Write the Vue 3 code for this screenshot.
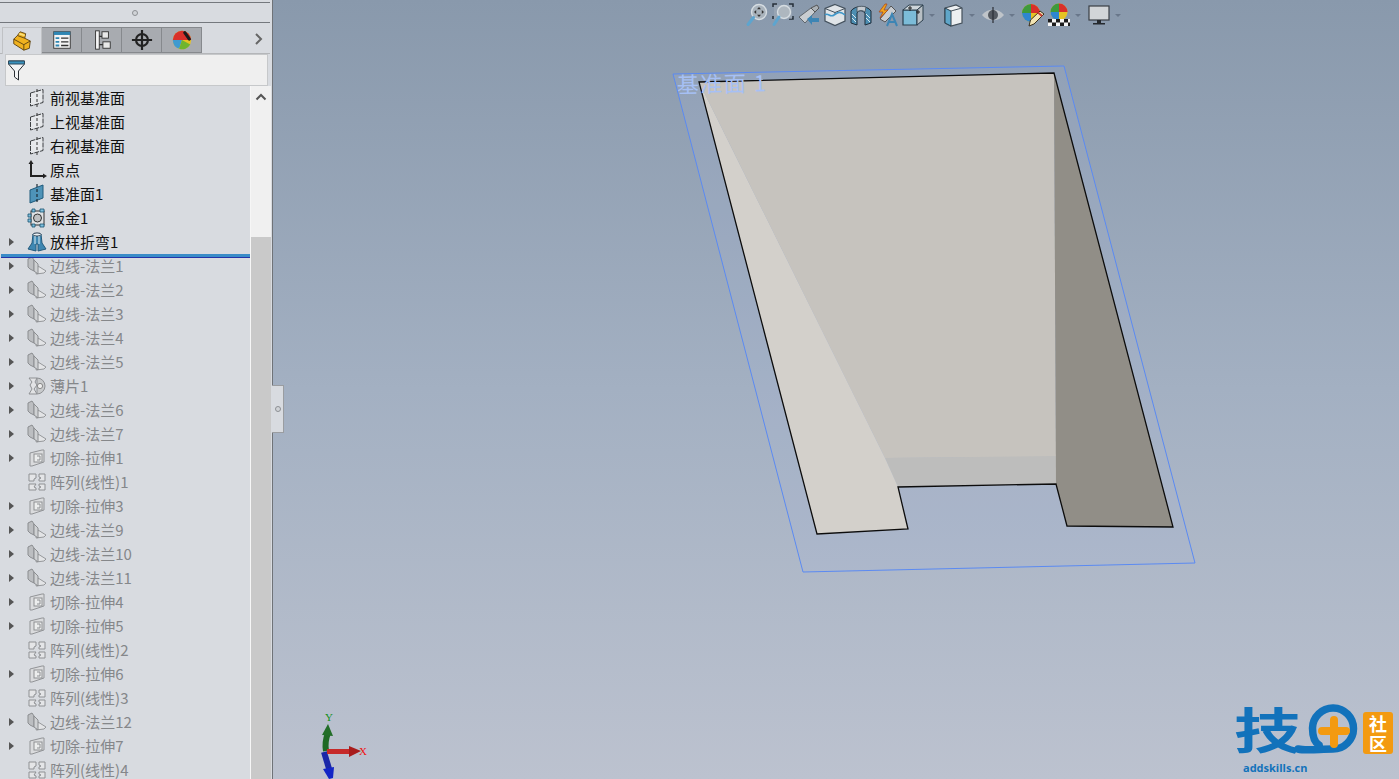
<script setup>
const flange = (n) => ({ label: `边线-法兰${n}`, icon: 'flange', arrow: true, off: true })
const cut = (n) => ({ label: `切除-拉伸${n}`, icon: 'cut', arrow: true, off: true })
const pattern = (n) => ({ label: `阵列(线性)${n}`, icon: 'pattern', arrow: false, off: true })

const rows = [
  { label: '前视基准面', icon: 'plane' },
  { label: '上视基准面', icon: 'plane' },
  { label: '右视基准面', icon: 'plane' },
  { label: '原点', icon: 'origin' },
  { label: '基准面1', icon: 'bluePlane' },
  { label: '钣金1', icon: 'sheet' },
  { label: '放样折弯1', icon: 'loft', arrow: true, rollback: true },
  flange(1), flange(2), flange(3), flange(4), flange(5),
  { label: '薄片1', icon: 'tab', arrow: true, off: true },
  flange(6), flange(7), cut(1), pattern(1), cut(3),
  flange(9), flange(10), flange(11), cut(4), cut(5), pattern(2), cut(6), pattern(3),
  flange(12), cut(7), pattern(4)
]
const tabs = ['tabFeature', 'tabProps', 'tabConfig', 'tabTarget', 'tabBall']
const tools = [
  { id: 'tFit' }, { id: 'tArea' }, { id: 'tPrev' }, { id: 'tSection' }, { id: 'tDyn' }, { id: 'tBolt' },
  { id: 'tCube', caret: true }, { id: 'tDisplay', caret: true }, { id: 'tEye', caret: true },
  { id: 'tBallPen' }, { id: 'tBallCheck', caret: true }, { id: 'tMonitor', caret: true }
]
</script>

<template>
  <div class="app">
    <svg class="defs" width="0" height="0" aria-hidden="true">
      <defs>
        <symbol id="plane" viewBox="0 0 20 20">
          <path d="M3.500 5 L16 1.500 V14.500 L3.500 18 Z" fill="#e6e8eb" stroke="#3c3f42" stroke-width="1" stroke-dasharray="5 1"/>
          <path d="M10 1 V19" stroke="#333" stroke-width="1" stroke-dasharray="3 2"/>
        </symbol>
        <symbol id="origin" viewBox="0 0 20 20">
          <path d="M4 2 V16 H18" fill="none" stroke="#222" stroke-width="2"/>
          <path d="M4 0 L1.500 4 H6.500 Z M20 16 L16 13.500 V18.500 Z" fill="#222"/>
        </symbol>
        <symbol id="bluePlane" viewBox="0 0 20 20">
          <path d="M3 6 L16 1 V14 L3 19 Z" fill="#4e93b8" stroke="#1f5a7c"/>
          <path d="M10 0 V20" stroke="#1d2b35" stroke-width="1.200" stroke-dasharray="3 2"/>
        </symbol>
        <symbol id="sheet" viewBox="0 0 20 20">
          <rect x="4" y="3" width="13" height="14" fill="#dfe1e3" stroke="#333"/>
          <circle cx="10.500" cy="10" r="4" fill="#bdbfc1" stroke="#333"/>
          <path d="M5 1h3v3H5zM13 1h4v3h-4zM1 6h3v3H1zM1 11h3v3H1zM5 16h3v3H5zM13 16h4v3h-4z" fill="#7fc0de" stroke="#17506f" stroke-width=".8"/>
        </symbol>
        <symbol id="loft" viewBox="0 0 20 20">
          <path d="M6 2 H14 L15 11 L19 17 L11 19 V12 H9 V19 L1 17 L5 11 Z" fill="#3f87b2" stroke="#245a7c"/>
          <ellipse cx="10" cy="2.500" rx="4" ry="1.600" fill="#e8eef2" stroke="#345"/>
          <path d="M8 4 V12 M12 4 V12" stroke="#dcebf3" stroke-width="1"/>
        </symbol>
        <symbol id="flange" viewBox="0 0 20 20">
          <path d="M11 10 L19 15 L17 17 L9 18 Z" fill="#e3e4e6" stroke="#96989b"/>
          <path d="M1 3 L5 1 L7 4 V15 L3 13 L1 11 Z" fill="#bcbec1" stroke="#8b8d90"/>
          <path d="M7 4 L11 8 V18 L7 15 Z" fill="#cfd1d3" stroke="#8b8d90"/>
        </symbol>
        <symbol id="cut" viewBox="0 0 20 20">
          <path d="M3 5 L15 2 H17 V14 L5 18 H3 Z" fill="#dadbdd" stroke="#929497"/>
          <rect x="7" y="6" width="8" height="8" fill="#eceded" stroke="#8d8f92"/>
          <path d="M10 8 H13 V12 H10" fill="none" stroke="#8d8f92"/>
        </symbol>
        <symbol id="pattern" viewBox="0 0 20 20">
          <path d="M2 2 H9 V6 L7 7 V9 H2 Z M12 2 H18 V9 H12 V7 L14 6 L12 5 Z M2 12 H9 L7 15 L9 16 V18 H2 Z M12 12 H18 V18 H12 V16 L14 15 L12 14 Z" fill="#e4e5e7" stroke="#8f9194"/>
        </symbol>
        <symbol id="tab" viewBox="0 0 20 20">
          <path d="M2 2 H10 L8 6 L10 9 L7 13 L10 18 H2 L5 13 L3 9 L5 6 Z" fill="#e2e3e5" stroke="#8f9194"/>
          <path d="M10 2 A8 8 0 0 1 10 18 Z" fill="#c8cacc" stroke="#8f9194"/>
          <circle cx="13" cy="10" r="2.600" fill="#eee" stroke="#888"/>
        </symbol>

        <symbol id="tabFeature" viewBox="0 0 24 24">
          <path d="M7 6 L10 2 L16 4 L15 9 L21 12 L20 20 L14 22 L3 15 L3 10 Z" fill="#f0b21f" stroke="#5c4210"/>
          <path d="M3 10 L14 16 L21 12 M14 16 V22 M7 6 L15 9" fill="none" stroke="#5c4210"/>
          <path d="M9 4 L15 6" stroke="#fbe07a" stroke-width="2"/>
        </symbol>
        <symbol id="tabProps" viewBox="0 0 24 24">
          <rect x="3" y="3" width="18" height="18" fill="#f5f5f5" stroke="#333"/>
          <rect x="3" y="3" width="18" height="3.500" fill="#2f86b3"/>
          <path d="M5 9h4v2H5zM5 13h4v2H5zM5 17h4v2H5z" fill="#2f86b3"/>
          <path d="M11 10h8M11 14h8M11 18h8" stroke="#333" stroke-width="1.400"/>
        </symbol>
        <symbol id="tabConfig" viewBox="0 0 24 24">
          <rect x="5" y="2" width="4" height="20" fill="#f5f5f5" stroke="#333"/>
          <path d="M9 8 H13 M9 17 H13" stroke="#333" stroke-width="1.500"/>
          <rect x="12" y="3" width="7" height="7" fill="#e8e8e8" stroke="#333"/>
          <rect x="13" y="14" width="8" height="7" fill="#e8e8e8" stroke="#333"/>
        </symbol>
        <symbol id="tabTarget" viewBox="0 0 24 24">
          <circle cx="12" cy="12" r="6.500" fill="none" stroke="#222" stroke-width="2.400"/>
          <path d="M12 1 V23 M1 12 H23" stroke="#222" stroke-width="2.400"/>
        </symbol>
        <symbol id="tabBall" viewBox="0 0 24 24">
          <circle cx="12" cy="12" r="10" fill="#e6c324"/>
          <path d="M12 12 L2 12 A10 10 0 0 1 12 2 Z" fill="#d9302a"/>
          <path d="M12 12 L2 12 A10 10 0 0 0 9 21.500 Z" fill="#3f9ad0"/>
          <path d="M12 12 L9 21.500 A10 10 0 0 0 21 17 Z" fill="#6fb52e"/>
          <path d="M12 2 A10 10 0 0 1 22 12 L12 12 Z" fill="#d9302a"/>
          <path d="M15 4 L20 11" stroke="#1b1b1b" stroke-width="3.400" stroke-linecap="round"/>
        </symbol>

        <symbol id="tFit" viewBox="0 0 24 24">
          <circle cx="14" cy="9" r="7.500" fill="#a9b3bc" stroke="#d6dde2" stroke-width="1.400"/>
          <path d="M14 4 l-2 2.200h4zM14 14 l-2 -2.200h4zM9 9 l2.200 -2v4zM19 9 l-2.200 -2v4z" fill="#333"/>
          <path d="M8.500 14.500 L3 21.500" stroke="#5da5cf" stroke-width="3" stroke-linecap="round"/>
        </symbol>
        <symbol id="tArea" viewBox="0 0 24 24">
          <path d="M6 1H2v3M18 1h4v3M2 13v3M22 13v3h-4" fill="none" stroke="#27303a" stroke-width="1.500"/>
          <rect x="3" y="2" width="18" height="14" fill="#a0abb7" opacity=".6"/>
          <circle cx="13" cy="9" r="6.500" fill="#aeb7bf" stroke="#d6dde2" stroke-width="1.400"/>
          <path d="M8 14 L3 21.500" stroke="#5da5cf" stroke-width="3" stroke-linecap="round"/>
        </symbol>
        <symbol id="tPrev" viewBox="0 0 24 24">
          <path d="M2 14 L14 5 L18 9 L8 20 Z" fill="#c9cdd1" stroke="#5f666d"/>
          <path d="M14 5 L20 2 L22 5 L18 9 Z" fill="#aab0b5" stroke="#555"/>
          <path d="M10 16 L15 12 V15 H22 V19 H15 V22 Z" fill="#3d85b4"/>
        </symbol>
        <symbol id="tSection" viewBox="0 0 24 24">
          <path d="M12 1.500 L22 5.500 V18 L12 22.500 L2 18 V5.500 Z" fill="#dfe4e8" stroke="#45525e" stroke-width="1.200"/>
          <path d="M2 5.500 L12 9.500 L22 5.500 M12 9.500 V12" fill="none" stroke="#45525e"/>
          <path d="M2 12 C5 9 7 15 11 12 S17 8 22 12" fill="none" stroke="#3f97c9" stroke-width="1.600"/>
        </symbol>
        <symbol id="tDyn" viewBox="0 0 24 24">
          <path d="M2 8 C6 2 18 2 22 8 L22 20 L16 22 V10 C13 7 10 7 8 10 V22 L2 20 Z" fill="#4c8eb2" stroke="#1f2f3c"/>
          <path d="M8 4 C11 3 14 3 17 4 L16 9 C13 7 11 7 8 9 Z" fill="#c4cad0" stroke="#55626d"/>
          <path d="M3 11 L7 15 M3 15 L7 19 M17 11 L21 15 M17 15 L21 19" stroke="#d9e6ee" stroke-width="1"/>
        </symbol>
        <symbol id="tBolt" viewBox="0 0 24 24">
          <path d="M5 16 L16 3 L21 8 L10 19 Z" fill="#c9cdd1" stroke="#555"/>
          <path d="M10 1 L4 9 H8 L5 15 L13 7 H9 L12 1 Z" fill="#f0a51c" stroke="#a8441a" stroke-width=".7"/>
          <path d="M12 23 L17 11 L22 23 M14 19 H20" fill="none" stroke="#3d85b4" stroke-width="2"/>
        </symbol>
        <symbol id="tCube" viewBox="0 0 24 24">
          <path d="M2 7 H16 V22 H2 Z" fill="#7cbcd8" stroke="#2b3e4d" stroke-width="1.200"/>
          <path d="M2 7 L8 2 H22 L16 7 Z" fill="#cdd5da" stroke="#2b3e4d"/>
          <path d="M16 7 L22 2 V17 L16 22 Z" fill="#b8bfc4" stroke="#2b3e4d"/>
          <path d="M9 3 V8 M7 5 h4 M19 9 H15 M17 7 v4" stroke="#222"/>
        </symbol>
        <symbol id="tDisplay" viewBox="0 0 24 24">
          <path d="M4 5 L15 2 L21 5 V20 L10 23 L4 20 Z" fill="#eceff1" stroke="#44505a" stroke-width="1.200"/>
          <path d="M4 5 L10 8 V23 L4 20 Z" fill="#5fa6c9" stroke="#2a3d4b"/>
          <path d="M10 8 L21 5" stroke="#44505a"/>
        </symbol>
        <symbol id="tEye" viewBox="0 0 24 24">
          <path d="M1 12 C6 5 18 5 23 12 C18 19 6 19 1 12 Z" fill="#bfc4c9"/>
          <circle cx="12" cy="12" r="5" fill="#555a61"/>
          <path d="M12 4 V20" stroke="#2a2e34" stroke-width="1.200"/>
        </symbol>
        <symbol id="tBallPen" viewBox="0 0 24 24">
          <circle cx="10" cy="10" r="9" fill="#e6c324"/>
          <path d="M10 10 H1 A9 9 0 0 1 10 1 Z" fill="#3e9a3c"/>
          <path d="M10 10 V1 A9 9 0 0 1 19 10 Z" fill="#d9302a"/>
          <path d="M10 10 H1 A9 9 0 0 0 10 19 Z" fill="#2f86cf"/>
          <path d="M8 23 L9.500 17 L19 8 L23 11 L13 21 Z" fill="#f2e4b3" stroke="#3a2f1a"/>
          <path d="M17 9.500 L21 13" stroke="#c83a32" stroke-width="2"/>
        </symbol>
        <symbol id="tBallCheck" viewBox="0 0 24 24">
          <circle cx="12" cy="9" r="8.500" fill="#e6c324"/>
          <path d="M12 9 H3.500 A8.500 8.500 0 0 1 12 .5 Z" fill="#3e9a3c"/>
          <path d="M12 9 V.5 A8.500 8.500 0 0 1 20.500 9 Z" fill="#d9302a"/>
          <path d="M12 9 H3.500 A8.500 8.500 0 0 0 12 17.500 Z" fill="#2f86cf"/>
          <rect x="1" y="16" width="22" height="7" fill="#f5f5f5"/>
          <path d="M1 16h4v3.500H1zM9 16h4v3.500H9zM17 16h4v3.500h-4zM5 19.500h4V23H5zM13 19.500h4V23h-4zM21 19.500h2V23h-2z" fill="#1c1c1c"/>
        </symbol>
        <symbol id="tMonitor" viewBox="0 0 24 24">
          <rect x="2" y="3" width="20" height="14" fill="#d2d5d8" stroke="#3a3f45" stroke-width="1.200"/>
          <path d="M10 17 H14 V20 H18 V21.500 H6 V20 H10 Z" fill="#25292e"/>
        </symbol>
      </defs>
    </svg>

    <aside class="panel">
      <div class="grip"><span class="dot"></span></div>
      <div class="tabs">
        <div v-for="(t, i) in tabs" :key="t" class="tab" :class="{ active: i === 0 }">
          <svg width="22" height="22"><use :href="`#${t}`"/></svg>
        </div>
        <svg class="more" width="10" height="14" viewBox="0 0 10 14"><path d="M2 2 L7 7 L2 12" fill="none" stroke="#666" stroke-width="2"/></svg>
      </div>
      <div class="filter">
        <svg width="20" height="24" viewBox="0 0 20 24">
          <path d="M1.500 3 H17.500 V6 L11.500 13 V22 L7.500 19 V13 L1.500 6 Z" fill="#f4f5f6" stroke="#2a2f34"/>
          <path d="M1.500 3 H17.500 V6 H1.500 Z" fill="#3a92bd" stroke="#2a4a5e"/>
        </svg>
      </div>
      <div class="tree-wrap">
        <ul class="tree">
          <li v-for="r in rows" :key="r.label" class="row" :class="{ off: r.off, rollback: r.rollback }">
            <span class="arrow"><i v-if="r.arrow"></i></span>
            <svg class="ico" width="20" height="20"><use :href="`#${r.icon}`"/></svg>
            <span class="lbl">{{ r.label }}</span>
          </li>
        </ul>
        <div class="scroll">
          <div class="track">
            <svg width="12" height="8" viewBox="0 0 12 8"><path d="M1.500 6.500 L6 2 L10.500 6.500" fill="none" stroke="#555" stroke-width="2"/></svg>
          </div>
          <div class="thumb"></div>
        </div>
      </div>
    </aside>

    <main class="view">
      <div class="handle"><span class="dot"></span></div>
      <div class="toolbar">
        <template v-for="t in tools" :key="t.id">
          <span class="tool"><svg width="24" height="24"><use :href="`#${t.id}`"/></svg></span>
          <span v-if="t.caret" class="caret"></span>
        </template>
      </div>
      <svg class="scene" viewBox="273 0 1126 779" width="1126" height="779">
        <polygon points="673,74 1064,66 1195,563 803,572" fill="#a3b4d8" fill-opacity=".2" stroke="#5b8af2" stroke-width="1"/>
        <polygon points="699,82 1054,73 1056,457 885,458" fill="#c6c3be"/>
        <polygon points="885,458 1056,456 1056,484 898,487" fill="#bdbdbc"/>
        <polygon points="699,82 885,458 898,487 908,529 817,534" fill="#d3d0cb"/>
        <polygon points="1054,73 1173,527 1067,526 1056,484" fill="#918e87"/>
        <path d="M817,534 L699,82 L1054,73 L1173,527 L1067,526 L1056,484 L898,487 L908,529 Z" fill="none" stroke="#0c0c0c" stroke-width="1.300"/>
        <text class="plane-name" x="677" y="93" transform="rotate(-1.2 677 93)">基准面 1</text>

        <g class="triad">
          <path d="M326 751 C325 745 326 738 328 733" stroke="#1f6a25" stroke-width="6" fill="none"/>
          <path d="M322 735 L328 724 L333 736 Z" fill="#226e28"/>
          <path d="M324 752 L330 772" stroke="#1a27a8" stroke-width="6" fill="none"/>
          <path d="M323 769 L334 767 L333 778 L329 779 Z" fill="#1326c6"/>
          <rect x="327" y="749" width="24" height="5" fill="#c62a2a"/>
          <path d="M349 746 L361 751 L349 757 Z" fill="#a81c1c"/>
          <text x="325" y="721" class="axis" fill="#0f8f1a">Y</text>
          <text x="359" y="755" class="axis" fill="#ee1111">X</text>
        </g>

        <g class="logo">
          <text transform="translate(1234 749) scale(1.12 .82)" class="logo-ji">技</text>
          <path d="M1298 749 C1306 751 1320 749 1333 749 A20.500 20.500 0 1 0 1312.500 728 C1312.500 735 1314 742 1319 745" fill="none" stroke="#1272bb" stroke-width="7.500" stroke-linecap="round"/>
          <path d="M1322 731 H1346 M1334 720 V744" stroke="#f39a11" stroke-width="8" stroke-linecap="round"/>
          <rect x="1363" y="712" width="30" height="42" rx="3" fill="#f39a11"/>
          <text x="1378" y="731" class="logo-sq">社</text>
          <text x="1378" y="751" class="logo-sq">区</text>
          <text x="1243" y="772" class="logo-url">addskills.cn</text>
        </g>
      </svg>
    </main>
  </div>
</template>

<style>
html, body { margin: 0; height: 100%; overflow: hidden; background: #d8dbe0; }
</style>

<style scoped>
.app { display: flex; width: 1399px; height: 779px; overflow: hidden; font-family: "Noto Sans CJK SC", "Noto Sans", sans-serif; }
.defs { position: absolute; }
.panel { width: 272px; flex: none; display: flex; flex-direction: column; background: #d8dbe0; border-right: 1px solid #6f7378; }
.grip { margin-top: 2px; height: 19px; border-top: 1px solid #74787d; border-bottom: 1px solid #74787d; margin-right: 2px; display: flex; align-items: center; justify-content: center; }
.dot { width: 6px; height: 6px; border-radius: 50%; border: 1px solid #8d9094; background: #d0d3d7; display: block; box-sizing: border-box; }
.tabs { margin-top: 4px; height: 26px; padding-left: 2px; display: flex; position: relative; border-bottom: 1px solid #b4b6b9; margin-right: 2px; }
.tab { width: 40px; height: 26px; box-sizing: border-box; display: flex; align-items: center; justify-content: center; background: #a8abb0; border: 1px solid #86898d; border-left-width: 0; }
.tab.active { background: #d8dbe0; border: 1px solid #c0c2c5; border-bottom: 0; height: 27px; }
.more { position: absolute; right: 6px; top: 5px; }
.filter { height: 30px; margin: 0 4px 0 5px; background: #efefef; border: 1px solid #c6c8ca; display: flex; align-items: center; padding-left: 1px; }
.tree-wrap { flex: 1; display: flex; min-height: 0; overflow: hidden; }
.tree { list-style: none; margin: 0; padding: 0; width: 250px; flex: none; }
.row { height: 24px; display: flex; align-items: center; position: relative; font-size: 15px; color: #111; white-space: nowrap; }
.row.off { color: #85878a; }
.row.rollback::after { content: ""; position: absolute; left: 1px; right: 0; top: 24px; height: 4px; background: #3a8cc8; border-bottom: 1px solid #2433a8; box-sizing: border-box; z-index: 1; }
.arrow { width: 27px; flex: none; display: flex; padding-left: 9px; box-sizing: border-box; }
.arrow i { width: 0; height: 0; border-left: 5px solid #555; border-top: 4px solid transparent; border-bottom: 4px solid transparent; }
.ico { flex: none; margin-right: 3px; }
.lbl { padding-bottom: 2px; }
.scroll { width: 20px; flex: none; display: flex; flex-direction: column; border-left: 1px solid #f6f6f6; }
.track { height: 151px; background: #f0f0f0; display: flex; justify-content: center; padding-top: 7px; box-sizing: border-box; }
.thumb { flex: 1; background: #c9c9c9; }
.view { flex: 1; position: relative; background: linear-gradient(#8999ac, #a3b0c2 50%, #bcc2cf); }
.scene { position: absolute; left: 0; top: 0; }
.handle { position: absolute; left: -1px; top: 385px; width: 12px; height: 48px; box-sizing: border-box; background: #d8dbe0; border: 1px solid #9a9da1; border-left: 0; display: flex; align-items: center; justify-content: center; z-index: 2; }
.toolbar { position: absolute; left: 471px; top: 3px; display: flex; align-items: center; z-index: 2; }
.tool { width: 26px; height: 24px; display: flex; justify-content: center; }
.caret { width: 12px; margin-right: 2px; display: flex; justify-content: center; }
.caret::before { content: ""; width: 0; height: 0; border-top: 3px solid #69778a; border-left: 3px solid transparent; border-right: 3px solid transparent; }
.plane-name { font-family: "Noto Sans CJK SC", sans-serif; font-size: 22px; font-weight: 400; fill: #a6c0f5; letter-spacing: 1.500px; }
.axis { font-family: "Liberation Serif", serif; font-size: 11px; }
.logo-ji { font-family: "Noto Sans CJK SC", sans-serif; font-weight: 700; font-size: 60px; fill: #1272bb; }
.logo-sq { font-family: "Noto Sans CJK SC", sans-serif; font-weight: 700; font-size: 18px; fill: #fff; text-anchor: middle; }
.logo-url { font-family: "Open Sans", "Liberation Sans", sans-serif; font-weight: 700; font-size: 11px; fill: #1272bb; }
</style>
